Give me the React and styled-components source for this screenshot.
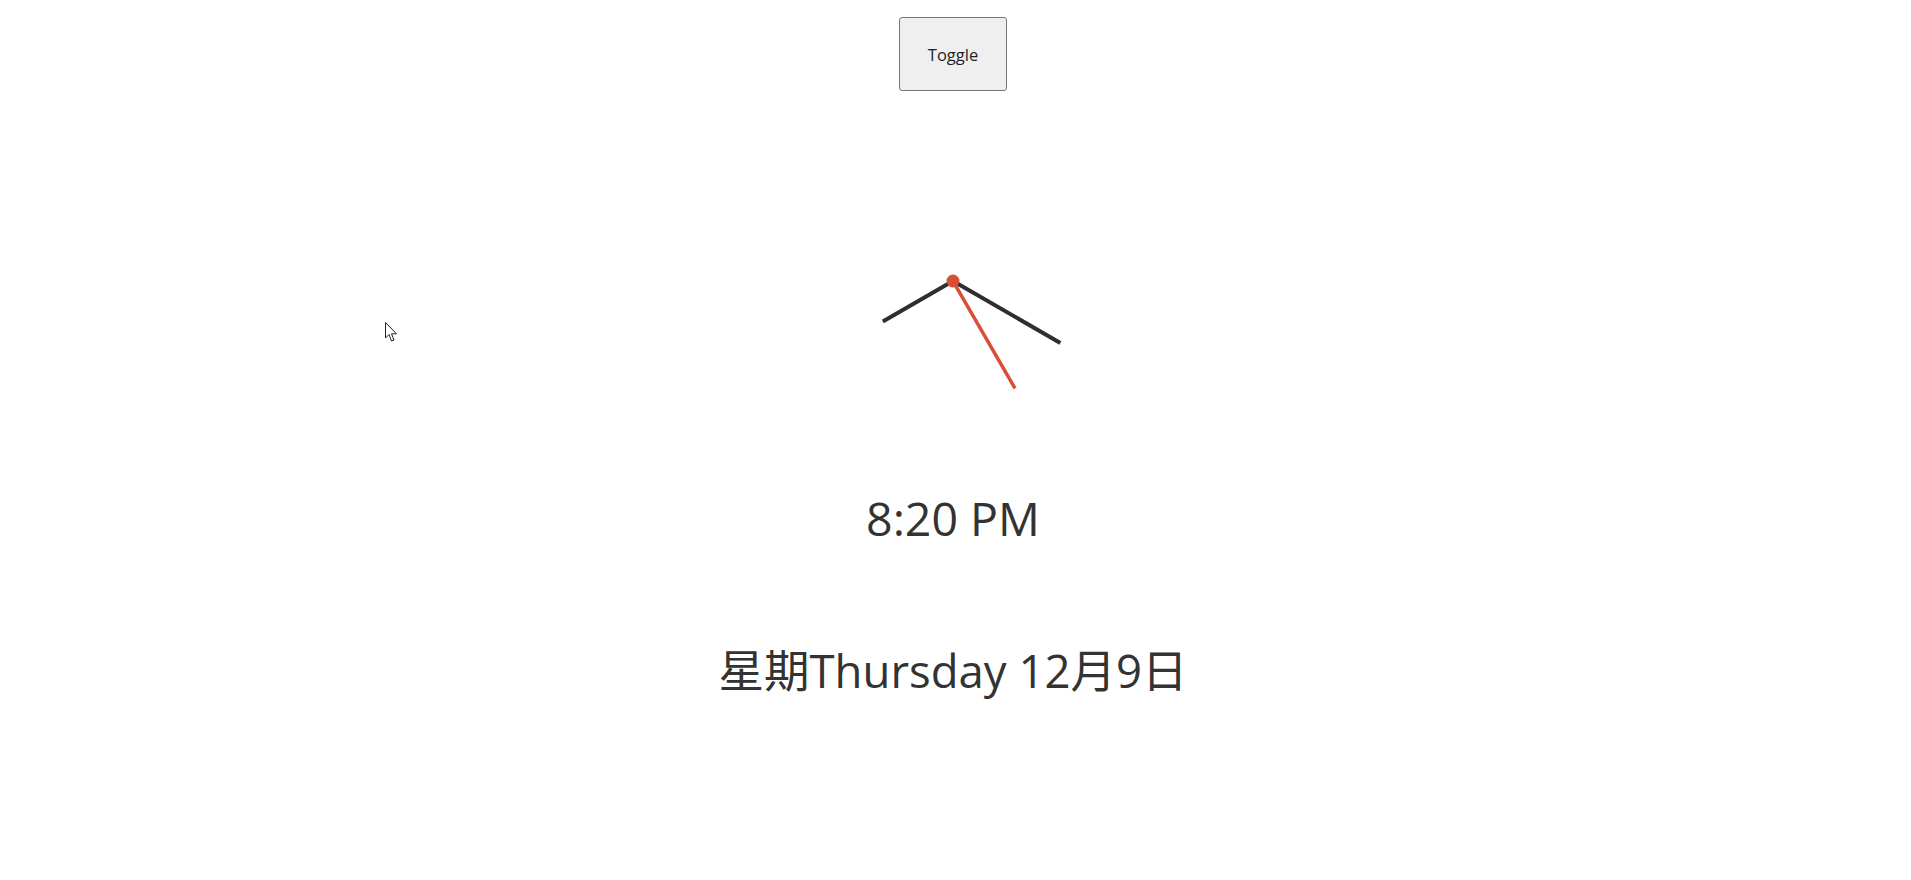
import React from 'react'
import styled, { createGlobalStyle } from 'styled-components'

const GlobalStyle = createGlobalStyle`
  html, body {
    margin: 0;
    background: #ffffff;
  }
  body {
    font-family: "Open Sans", "Noto Sans CJK SC", sans-serif;
    color: #333333;
  }
`

const Page = styled.div`
  position: relative;
  min-height: 880px;
  display: flex;
  flex-direction: column;
  align-items: center;
  padding-top: 17px;
  padding-right: 5px;
  box-sizing: border-box;
`

const ToggleButton = styled.button`
  width: 108px;
  height: 74px;
  background: #efefef;
  border: 1px solid #767676;
  border-radius: 3px;
  font-family: "Open Sans", sans-serif;
  font-size: 16.5px;
  color: #1e1e2a;
  cursor: pointer;
`

const ClockFace = styled.svg`
  margin-top: 60px;
  display: block;
`

const TimeText = styled.div`
  margin-top: 84px;
  font-size: 46.5px;
  line-height: 1;
`

const DateText = styled.div`
  margin-top: 106px;
  font-size: 45.5px;
  line-height: 1;
`

const Cursor = styled.svg`
  position: absolute;
  left: 385px;
  top: 322px;
`

const SIZE = 260
const C = SIZE / 2

const hand = (deg, len) => {
  const r = (deg * Math.PI) / 180
  return { x2: C + Math.sin(r) * len, y2: C - Math.cos(r) * len }
}

const Clock = ({ h, m, s }) => {
  const hourA = ((h % 12) + m / 60) * 30 - 10
  const minA = m * 6
  const secA = s * 6
  return (
    <ClockFace width={SIZE} height={SIZE} viewBox={`0 0 ${SIZE} ${SIZE}`}>
      <line x1={C} y1={C} {...hand(hourA, 81)} stroke="#2e2e2e" strokeWidth="4" />
      <line x1={C} y1={C} {...hand(minA, 124)} stroke="#2e2e2e" strokeWidth="4" />
      <line x1={C} y1={C} {...hand(secA, 124)} stroke="#d84f37" strokeWidth="3.5" />
      <circle cx={C} cy={C} r="6.5" fill="#d84f37" />
    </ClockFace>
  )
}

const App = () => {
  return (
    <Page>
      <GlobalStyle />
      <ToggleButton>Toggle</ToggleButton>
      <Clock h={8} m={20} s={25} />
      <TimeText>8:20 PM</TimeText>
      <DateText>星期Thursday 12月9日</DateText>
      <Cursor width="13" height="21" viewBox="0 0 13 21">
        <path d="M0.5 0.5 L0.5 16 L4 12.5 L6.5 19 L9 18 L6.5 11.8 L11.5 11.8 Z" fill="#ffffff" stroke="#222" strokeWidth="1" strokeLinejoin="miter" />
      </Cursor>
    </Page>
  )
}

export default App
